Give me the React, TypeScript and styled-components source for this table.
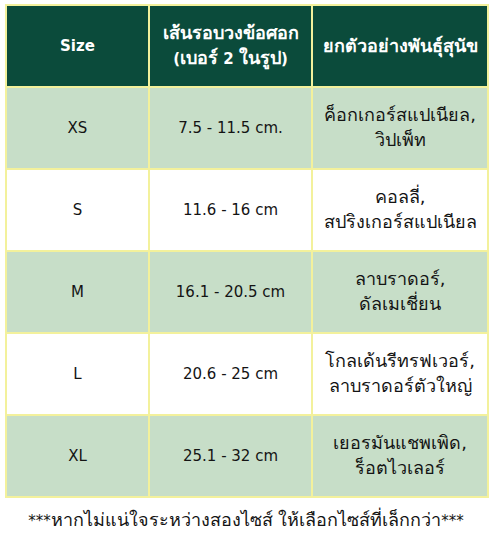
import React from "react";
import styled, { createGlobalStyle } from "styled-components";

type Row = { size: string; range: string; breeds: string[] };

const rows: Row[] = [
  { size: "XS", range: "7.5 - 11.5 cm.", breeds: ["ค็อกเกอร์สแปเนียล,", "วิปเพ็ท"] },
  { size: "S", range: "11.6 - 16 cm", breeds: ["คอลลี่,", "สปริงเกอร์สแปเนียล"] },
  { size: "M", range: "16.1 - 20.5 cm", breeds: ["ลาบราดอร์,", "ดัลเมเชี่ยน"] },
  { size: "L", range: "20.6 - 25 cm", breeds: ["โกลเด้นรีทรฟเวอร์,", "ลาบราดอร์ตัวใหญ่"] },
  { size: "XL", range: "25.1 - 32 cm", breeds: ["เยอรมันแชพเพิด,", "ร็อตไวเลอร์"] },
];

export default function App() {
  return (
    <>
      <GlobalStyle />
      <Page>
        <SizeTable>
          <colgroup>
            <col style={{ width: 143 }} />
            <col style={{ width: 163 }} />
            <col style={{ width: 176 }} />
          </colgroup>
          <thead>
            <tr>
              <HeadCell>Size</HeadCell>
              <HeadCell>
                <Thai>เส้นรอบวงข้อศอก</Thai>
                <br />
                (<Thai>เบอร์</Thai> 2 <Thai>ในรูป</Thai>)
              </HeadCell>
              <HeadCell>
                <Thai>ยกตัวอย่างพันธุ์สุนัข</Thai>
              </HeadCell>
            </tr>
          </thead>
          <tbody>
            {rows.map((row, i) => (
              <BodyRow key={row.size} $shaded={i % 2 === 0}>
                <Cell>{row.size}</Cell>
                <Cell>{row.range}</Cell>
                <Cell>
                  <Thai>{row.breeds[0]}</Thai>
                  <br />
                  <Thai>{row.breeds[1]}</Thai>
                </Cell>
              </BodyRow>
            ))}
          </tbody>
        </SizeTable>
        <Note>
          ***<Thai>หากไม่แน่ใจระหว่างสองไซส์ ให้เลือกไซส์ที่เล็กกว่า</Thai>***
        </Note>
      </Page>
    </>
  );
}

const GlobalStyle = createGlobalStyle`
  body {
    margin: 0;
    background: #ffffff;
    font-family: Tahoma, "DejaVu Sans", "Noto Sans", sans-serif;
    color: #141414;
  }
`;

const Page = styled.div`
  width: 491px;
  height: 543px;
  padding: 4px 4px 0 5px;
  box-sizing: border-box;
`;

const Thai = styled.span`
  font-size: 18px;
`;

const SizeTable = styled.table`
  width: 482px;
  border-collapse: collapse;
  table-layout: fixed;
  border: 2px solid #f3f19c;
`;

const HeadCell = styled.th`
  height: 80px;
  padding: 0 2px;
  background: #0b4b3b;
  color: #ffffff;
  font-size: 15px;
  font-weight: bold;
  line-height: 23px;
  text-align: center;
  vertical-align: middle;
  border: 2px solid #f3f19c;
`;

const BodyRow = styled.tr<{ $shaded: boolean }>`
  background: ${(p) => (p.$shaded ? "#c7dec8" : "#ffffff")};
`;

const Cell = styled.td`
  height: 80px;
  padding: 0 2px;
  font-size: 15px;
  line-height: 24px;
  text-align: center;
  vertical-align: middle;
  border: 2px solid #f3f19c;
`;

const Note = styled.p`
  margin: 10px 0 0;
  font-size: 15px;
  line-height: 24px;
  text-align: center;
  color: #141414;
`;
